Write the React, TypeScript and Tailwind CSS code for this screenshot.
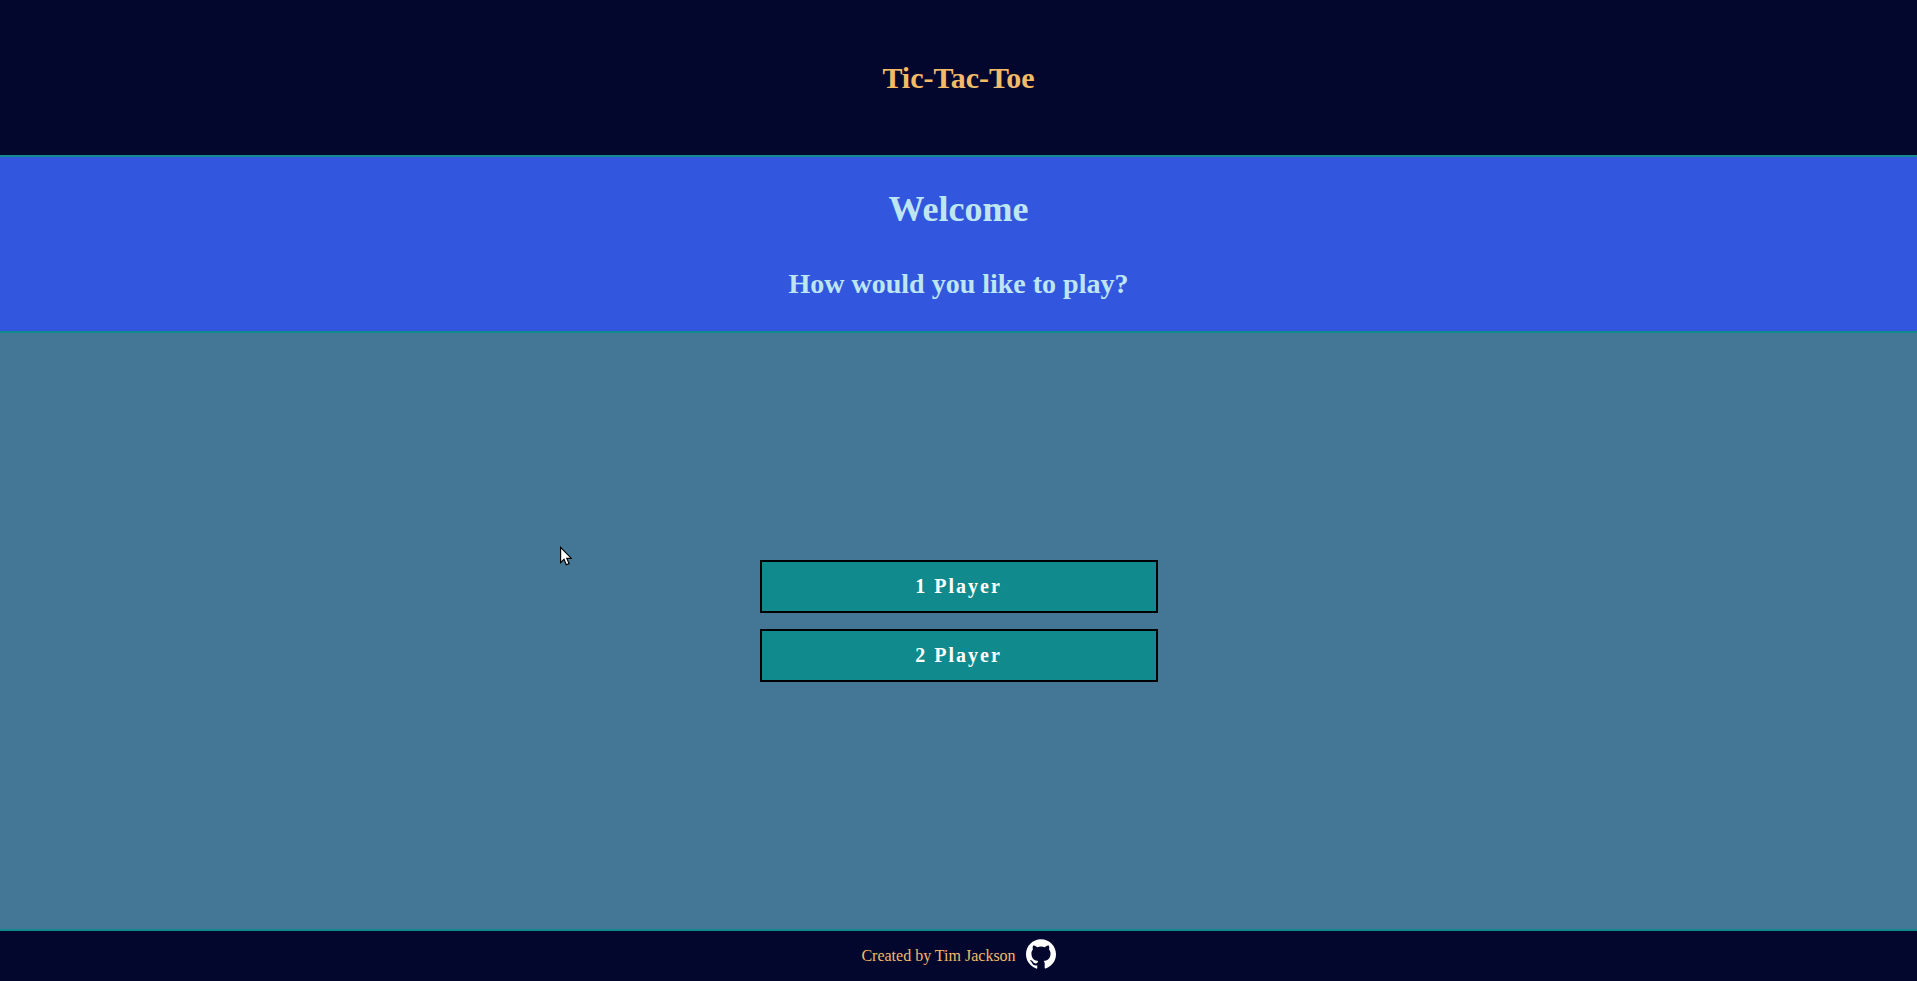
import { SiGithub } from "react-icons/si";

const modes = ["1 Player", "2 Player"];

export default function App() {
  return (
    <div className="flex min-h-screen flex-col bg-[#447796] font-['Liberation_Serif',serif]">
      <header className="border-b-2 border-[#108a8c] bg-[#04072d] py-[60px] text-center">
        <h1 className="text-[30px] leading-[35px] font-bold text-[#f2bb69]">Tic-Tac-Toe</h1>
      </header>
      <section className="flex flex-col gap-[38px] border-b-2 border-[#108a8c] bg-[#3356de] py-[31px] text-center font-bold text-[#bee6f2]">
        <h2 className="text-[36px] leading-[42px]">Welcome</h2>
        <h3 className="text-[28px] leading-[32px]">How would you like to play?</h3>
      </section>
      <main className="flex flex-1 flex-col items-center justify-center gap-4 pb-5">
        {modes.map((mode) => (
          <button
            key={mode}
            type="button"
            className="w-[398px] max-w-full border-2 border-black bg-[#108a8c] py-[13px] text-[20px] leading-[23px] font-bold tracking-[2px] text-white"
          >
            {mode}
          </button>
        ))}
      </main>
      <footer className="flex items-center justify-center gap-[10px] border-t-2 border-[#108a8c] bg-[#04072d] pt-2 pb-3 text-[16px] leading-[18px] text-[#f2bb69]">
        <p className="pt-1">Created by Tim Jackson</p>
        <a href="https://github.com" aria-label="GitHub" className="text-white">
          <SiGithub className="size-[30px]" />
        </a>
      </footer>
      <svg
        viewBox="0 0 12 20"
        aria-hidden="true"
        className="pointer-events-none absolute top-[546px] left-[560px] h-[20px] w-[12px]"
      >
        <path
          d="M.6 1.4v15.2l3.4-3.2 2.3 5.4 2.8-1.2-2.3-5.2h4.6z"
          fill="white"
          stroke="black"
          strokeWidth="1.2"
        />
      </svg>
    </div>
  );
}
